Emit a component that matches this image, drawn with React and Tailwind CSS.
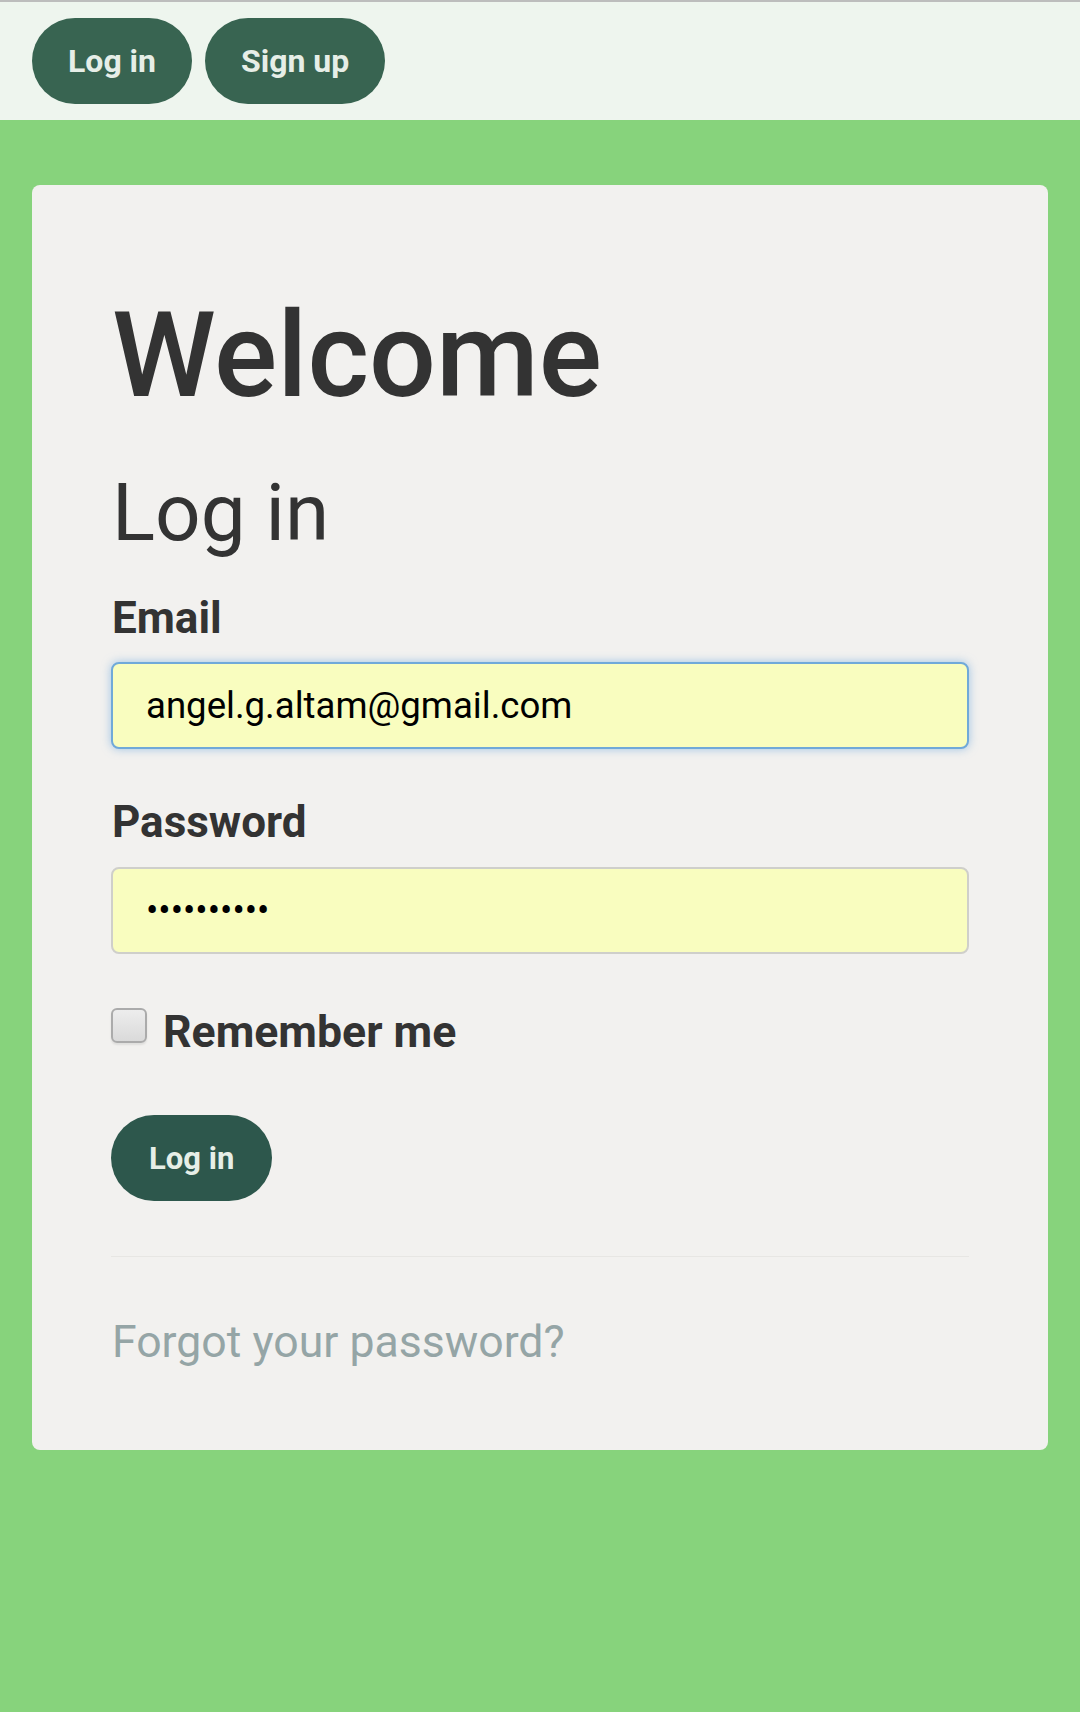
const NavButton = ({ children }) => (
  <button
    type="button"
    className="h-[86px] px-[36px] rounded-full bg-[#386451] text-[#e6eee7] text-[32px] font-bold leading-none"
  >
    {children}
  </button>
)

const App = () => {
  return (
    <div className="min-h-[1712px] bg-[#87d37c] font-['Roboto','Liberation_Sans',sans-serif] text-[#333]">
      <div className="h-[120px] bg-[#eef5ee] border-t-2 border-[#bdbdbd] px-[32px] pt-[16px] flex items-start gap-[13px]">
        <NavButton>Log in</NavButton>
        <NavButton>Sign up</NavButton>
      </div>

      <div className="px-[32px] pt-[65px]">
        <div className="bg-[#f2f1ef] rounded-[8px] pl-[79px] pr-[79px] pt-[112px] pb-[86px]">
          <h1 className="pl-[1px] text-[118px] leading-[118px] font-medium">Welcome</h1>

          <h2 className="pl-[1px] mt-[58px] text-[80px] leading-[80px] font-normal">Log in</h2>

          <form onSubmit={(e) => e.preventDefault()}>
            <label className="pl-[1px] block mt-[43px] text-[44px] leading-[44px] font-bold">Email</label>
            <input
              type="email"
              defaultValue="angel.g.altam@gmail.com"
              className="mt-[22px] block w-full h-[87px] rounded-[8px] bg-[#f9fdbf] border-2 border-[#70a9d9] shadow-[0_0_10px_rgba(102,163,222,0.6)] px-[33px] text-[36.6px] text-black outline-none"
            />

            <label className="pl-[1px] block mt-[51px] text-[44px] leading-[44px] font-bold">Password</label>
            <input
              type="password"
              defaultValue="secretpass"
              className="mt-[23px] block w-full h-[87px] rounded-[8px] bg-[#f9fdbf] border-2 border-[#cfcfca] px-[33px] text-[36.6px] text-black outline-none"
            />

            <div className="mt-[54px] flex items-start gap-[16px]">
              <span className="block w-[36px] h-[35px] rounded-[6px] border-2 border-[#ababab] bg-gradient-to-b from-[#ededed] to-[#dadada] shadow-[0_2px_2px_rgba(0,0,0,0.08)]" />
              <span className="mt-[2px] text-[44.6px] leading-[44px] font-bold">Remember me</span>
            </div>

            <button
              type="submit"
              className="mt-[61px] h-[86px] px-[38px] rounded-full bg-[#2d574c] text-[#e6eee7] text-[31px] font-bold leading-none"
            >
              Log in
            </button>
          </form>

          <div className="mt-[55px] h-px bg-[#e7e6e3]" />

          <a href="#" className="pl-[1px] block mt-[63px] text-[44.6px] leading-[44px] text-[#95a5a6]">
            Forgot your password?
          </a>
        </div>
      </div>
    </div>
  )
}

export default App
